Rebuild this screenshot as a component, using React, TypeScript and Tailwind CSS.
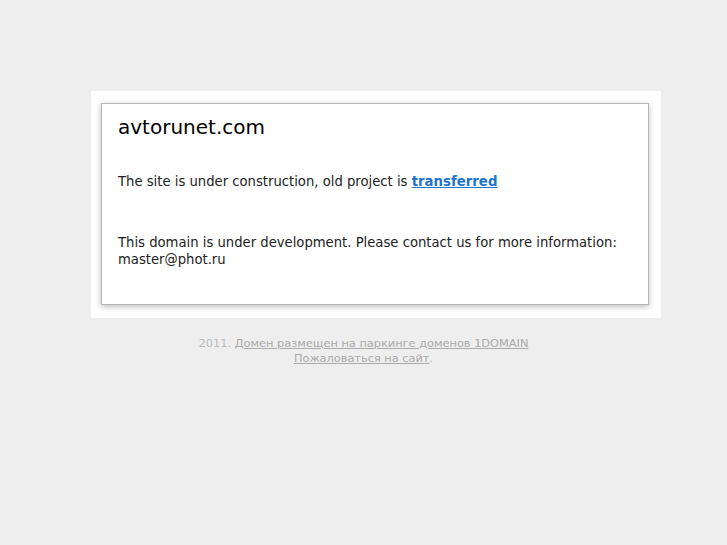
export default function App() {
  return (
    <div className="min-h-[545px] bg-[#eeeeee] pt-[91px] font-['DejaVu_Sans',sans-serif]">
      <div className="ml-[91px] w-[570px] bg-white pt-[12px] pl-[10px] pr-[12px] pb-[13px]">
        <div className="border border-[#b4b4b4] bg-white px-[16px] pt-[11px] pb-[36px] shadow-[0_2px_6px_rgba(0,0,0,0.25)]">
          <h1 className="text-[20px] leading-[24px] text-black">avtorunet.com</h1>
          <p className="mt-[34px] text-[13.2px] leading-[18px] text-[#222]">
            The site is under construction, old project is{" "}
            <a href="#" className="text-[13.3px] font-bold text-[#1e73cf] underline">
              transferred
            </a>
          </p>
          <p className="mt-[43px] text-[13.2px] leading-[17px] text-[#222]">
            This domain is under development. Please contact us for more information:
            <br />
            master@phot.ru
          </p>
        </div>
      </div>
      <div className="mt-[18px] text-center text-[11.35px] leading-[15px] text-[#bbbbbb]">
        2011.{" "}
        <a href="#" className="text-[#aaaaaa] underline">
          Домен размещен на паркинге доменов 1DOMAIN
        </a>
        <br />
        <a href="#" className="text-[#aaaaaa] underline">
          Пожаловаться на сайт
        </a>
        .
      </div>
    </div>
  );
}
